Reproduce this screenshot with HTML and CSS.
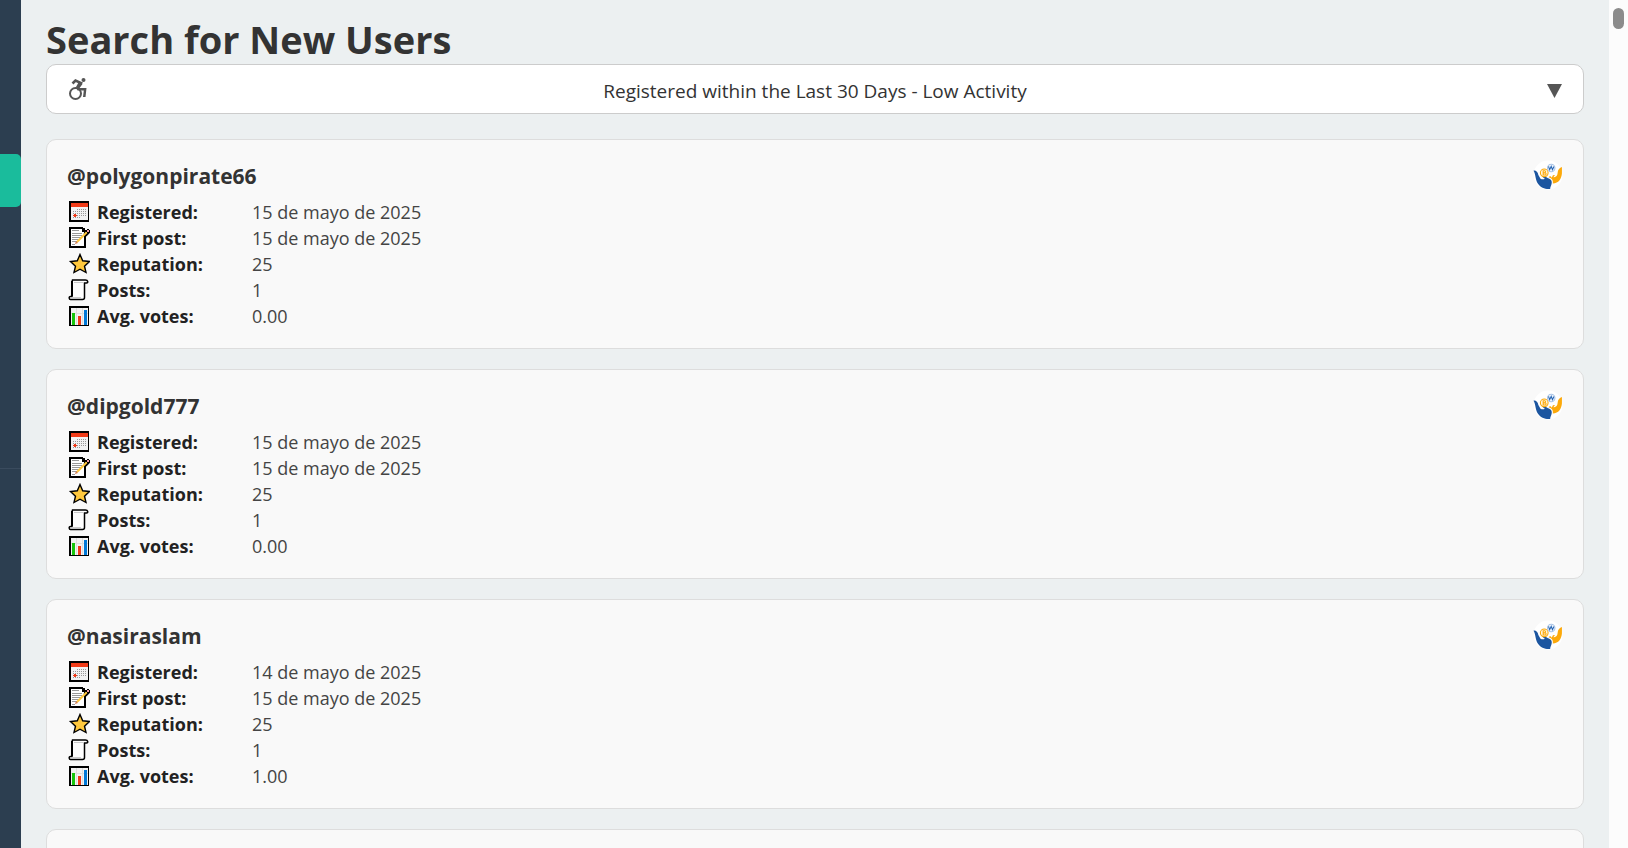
FILE: index.html
```
<!DOCTYPE html>
<html lang="en">
<head>
    <meta charset="UTF-8">
    <meta name="viewport" content="width=device-width, initial-scale=1.0">
    <title>Search for New Users</title>
    <link rel="stylesheet" href="styles.css">
</head>
<body>
    <!-- shared icons -->
    <svg class="sprite" aria-hidden="true">
        <symbol id="calendar" viewBox="0 0 22 22">
            <path fill="#000" d="M1 0h20v21H1z"/>
            <path fill="#f03a17" d="M3 2h17v4H3z"/>
            <path fill="#f2f2f2" d="M3 6h17v13H3z"/>
            <path stroke="#999" stroke-dasharray="1 1" d="M9 8.500h9M5 10.500h13M5 12.500h13M5 14.500h13M5 16.500h8"/>
            <path fill="#f03a17" d="M6 13h2v3H6zM5 14h4v1H5z"/>
        </symbol>
        <symbol id="memo" viewBox="0 0 22 22">
            <path fill="#000" d="M1 0h14v1h2v2h1v18H1z"/>
            <path fill="#fff" d="M3 2h11v3h2v14H3z"/>
            <path stroke="#999" d="M4 3.500h7M4 6.500h10M4 8.500h10M4 10.500h9M4 12.500h8M4 14.500h5M4 17.500h3"/>
            <path stroke="#000" stroke-width="4" d="M17 8l4-4"/>
            <path stroke="#ffc83d" stroke-width="2" d="M9 15l10-10"/>
            <path fill="#f59aa5" stroke="#000" d="M18 4l2-2 2 2-2 2z"/>
            <path fill="#d67d52" d="M7 17l1-3 2 2z"/>
        </symbol>
        <symbol id="star" viewBox="0 0 22 22">
            <path fill="#ffc83d" stroke="#000" stroke-width="1.400" d="M12 1.500l2.700 6.300 6.800.7-5 4.700 1.500 6.300-6-3.300-6 3.300 1.500-6.300-5-4.700 6.800-.7z"/>
        </symbol>
        <symbol id="scroll" viewBox="0 0 22 22">
            <path fill="#fff" stroke="#000" stroke-width="1.500" d="M4.500 1h13c2.500 0 3 3 1 3h-2v14.500c0 1.500-1 2-2 2h-12c-1.500 0-2-3 0-3h1.500V3z"/>
            <path stroke="#000" stroke-width="2" d="M4 2v15"/>
            <path stroke="#ccc" d="M6 3.500h9M4 18.500h9"/>
        </symbol>
        <symbol id="chart" viewBox="0 0 22 22">
            <path fill="#000" d="M1 1h20v20H1z"/>
            <path fill="#f2f2f2" d="M3 3h17v17H3z"/>
            <path stroke="#ddd" d="M3 8.500h17M8.500 3v17M14.500 3v17"/>
            <path fill="#16c60c" d="M4 8h3v12H4z"/>
            <path fill="#f03a17" d="M10 11h3v9h-3z"/>
            <path fill="#0078d7" d="M16 5h3v15h-3z"/>
        </symbol>
        <symbol id="hands" viewBox="0 0 28 28">
            <circle cx="14" cy="14" r="13.500" fill="#fff"/>
            <path fill="#1c56a0" d="M.5 10c2-.5 4 1 4.500 4l2 3.500c1 .5 3 1 4 0L8.500 15.500c1-1 2.500-.5 4 .7 2 1.300 4.800 1.600 5 4.300.2 3-1.500 4-1.500 6.500-4 .5-9-1-11.500-5C2 18 2.500 13 .5 10z"/>
            <path fill="#fca90b" d="M27 6.500v6c-.5 5-3 9-8.500 9.500.5-3-.5-5-4-6 1-1.500 2.500-1 3 .5 1-1.500.5-3 3-2.500L19 16c2 .5 4-1 4-4 0-3 2-5 4-5.500z"/>
            <circle cx="10.500" cy="12" r="3.600" fill="#fff6df" stroke="#fca90b"/>
            <path fill="none" stroke="#fca90b" d="M9.500 10h1.500q1.500 1 0 2H9.500h2q1.500 1 0 2H9.500z"/>
            <circle cx="17" cy="7.500" r="3.500" fill="#edf3fb" stroke="#a9c4e6"/>
            <path fill="none" stroke="#2a68b5" d="M14.500 6l1 3 1.500-3 1.200 3 1.300-3"/>
        </symbol>
    </svg>

    <nav class="sidebar">
        <a class="active" href="#users" aria-label="New users"></a>
        <hr>
    </nav>

    <main>
        <h1>Search for New Users</h1>

        <div class="filter">
            <svg class="wheelchair" viewBox="0 0 22 22" aria-hidden="true">
                <circle cx="16.500" cy="2" r="2"/>
                <path fill="none" stroke="#555" stroke-width="2.600" d="M5.500 5.500l3-3L14 5l-3.500 5"/>
                <path d="M12 3.500l3.500 2.500-3 4H19.500L18.500 19H16l.8-6.500H10.500L9 9z"/>
                <circle cx="8.500" cy="15.500" r="5.500" fill="none" stroke="#555" stroke-width="2"/>
            </svg>
            <select aria-label="Activity filter">
                <option>Registered within the Last 30 Days - Low Activity</option>
            </select>
            <svg class="arrow" viewBox="0 0 18 18" aria-hidden="true"><path d="M2 4h15L9.500 18z"/></svg>
        </div>

        <section class="card">
            <header>
                <h2>@polygonpirate66</h2>
                <svg class="hands"><use href="#hands"/></svg>
            </header>
            <dl>
                <dt><svg><use href="#calendar"/></svg>Registered:</dt><dd>15 de mayo de 2025</dd>
                <dt><svg><use href="#memo"/></svg>First post:</dt><dd>15 de mayo de 2025</dd>
                <dt><svg><use href="#star"/></svg>Reputation:</dt><dd>25</dd>
                <dt><svg><use href="#scroll"/></svg>Posts:</dt><dd>1</dd>
                <dt><svg><use href="#chart"/></svg>Avg. votes:</dt><dd>0.00</dd>
            </dl>
        </section>

        <section class="card">
            <header>
                <h2>@dipgold777</h2>
                <svg class="hands"><use href="#hands"/></svg>
            </header>
            <dl>
                <dt><svg><use href="#calendar"/></svg>Registered:</dt><dd>15 de mayo de 2025</dd>
                <dt><svg><use href="#memo"/></svg>First post:</dt><dd>15 de mayo de 2025</dd>
                <dt><svg><use href="#star"/></svg>Reputation:</dt><dd>25</dd>
                <dt><svg><use href="#scroll"/></svg>Posts:</dt><dd>1</dd>
                <dt><svg><use href="#chart"/></svg>Avg. votes:</dt><dd>0.00</dd>
            </dl>
        </section>

        <section class="card">
            <header>
                <h2>@nasiraslam</h2>
                <svg class="hands"><use href="#hands"/></svg>
            </header>
            <dl>
                <dt><svg><use href="#calendar"/></svg>Registered:</dt><dd>14 de mayo de 2025</dd>
                <dt><svg><use href="#memo"/></svg>First post:</dt><dd>15 de mayo de 2025</dd>
                <dt><svg><use href="#star"/></svg>Reputation:</dt><dd>25</dd>
                <dt><svg><use href="#scroll"/></svg>Posts:</dt><dd>1</dd>
                <dt><svg><use href="#chart"/></svg>Avg. votes:</dt><dd>1.00</dd>
            </dl>
        </section>

        <section class="card"></section>
    </main>

    <div class="scrollbar"><div class="thumb"></div></div>
</body>
</html>
```
FILE: styles.css
```
*{
    box-sizing: border-box;
}
body{
    margin: 0;
    display: flex;
    height: 100vh;
    overflow: hidden;
    background: #ecf0f1;
    color: #222;
    font-family: "Open Sans", "Noto Sans", sans-serif;
    font-size: 18px;
}
.sprite{
    display: none;
}
.sidebar{
    width: 21px;
    flex: none;
    padding-top: 154px;
    background: #2c3e50;
}
.sidebar .active{
    display: block;
    height: 53px;
    background: #1abc9c;
    border-radius: 0 5px 5px 0;
}
.sidebar hr{
    margin: 261px 0 0;
    border: 0;
    border-top: 1px solid #3a4b5e;
}
main{
    flex: 1;
    min-width: 0;
    padding: 14px 25px 0;
    overflow: hidden;
}
h1{
    margin: 0;
    font-size: 38px;
    line-height: 50px;
    color: #333;
}
.filter{
    display: flex;
    align-items: center;
    height: 50px;
    margin-bottom: 25px;
    padding: 0 20px;
    background: #fff;
    border: 1px solid #ccc;
    border-radius: 10px;
    fill: #555;
}
.filter select{
    flex: 1;
    height: 48px;
    padding: 4px 4px 0 0;
    appearance: none;
    border: 0;
    background: none;
    color: #333;
    font: inherit;
    font-size: 19px;
    text-align: center;
    text-align-last: center;
}
.wheelchair{
    width: 22px;
    height: 22px;
}
.arrow{
    width: 18px;
    height: 18px;
}
.card{
    min-height: 210px;
    margin-bottom: 20px;
    padding: 20px 20px 19px;
    background: #f9f9f9;
    border: 1px solid #ddd;
    border-radius: 10px;
}
.card header{
    display: flex;
    justify-content: space-between;
    height: 39px;
}
.card h2{
    margin: 0;
    font-size: 21px;
    line-height: 32px;
    color: #333;
}
.hands{
    width: 30px;
    height: 30px;
}
dl{
    display: grid;
    grid-template-columns: 185px 1fr;
    margin: 0;
    line-height: 26px;
}
dt{
    display: flex;
    align-items: center;
    gap: 7px;
    padding-left: 1px;
    font-weight: bold;
}
dt svg{
    width: 22px;
    height: 22px;
}
dd{
    margin: 0;
    color: #444;
}
.scrollbar{
    flex: none;
    width: 19px;
    padding: 8px 4px;
    background: #fcfcfc;
}
.thumb{
    height: 21px;
    background: #8b8b8b;
    border-radius: 6px;
}
```
